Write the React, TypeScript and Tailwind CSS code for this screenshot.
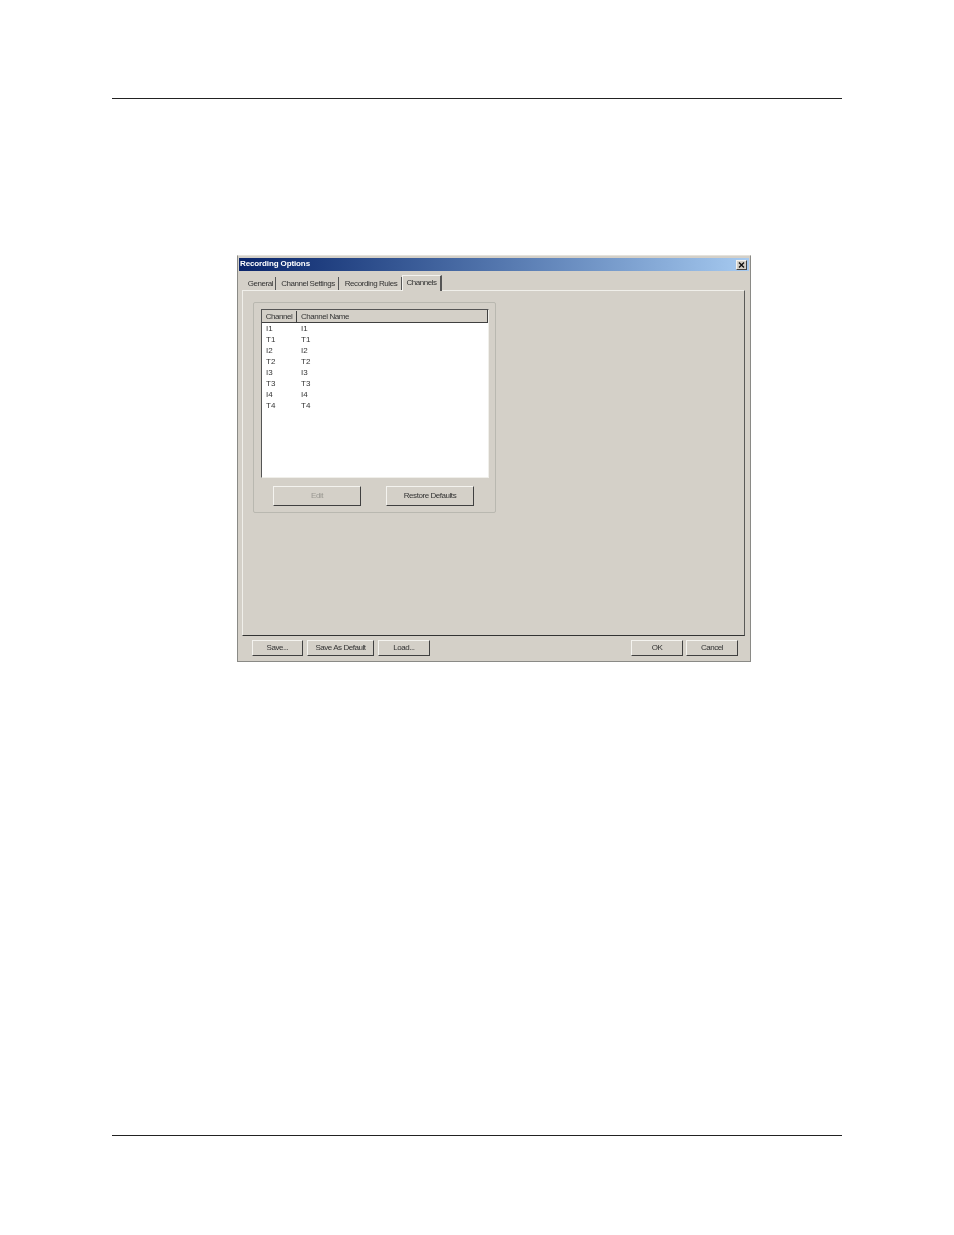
const rows = [
  ["I1", "I1"],
  ["T1", "T1"],
  ["I2", "I2"],
  ["T2", "T2"],
  ["I3", "I3"],
  ["T3", "T3"],
  ["I4", "I4"],
  ["T4", "T4"],
];

function Btn({ label, className, disabled }: { label: string; className: string; disabled?: boolean }) {
  return (
    <div
      className={`flex items-center justify-center whitespace-nowrap border border-t-[#f4f3ef] border-l-[#f4f3ef] border-r-[#404040] border-b-[#404040] text-[8px] leading-none tracking-[-0.45px] ${
        disabled ? "text-[#9a9892]" : "text-[#333333]"
      } ${className}`}
    >
      {label}
    </div>
  );
}

function Tab({ label, className }: { label: string; className: string }) {
  return (
    <div
      className={`-mb-px flex h-[14px] items-center justify-center whitespace-nowrap border-r border-r-[#555555] text-[8px] leading-none tracking-[-0.45px] text-[#333333] ${className}`}
    >
      {label}
    </div>
  );
}

export default function App() {
  return (
    <div className="h-[1235px] w-[954px] overflow-hidden bg-white pt-[98px] font-['Liberation_Sans',Arial,sans-serif]">
      <div className="mx-[112px] h-px bg-[#222222]" />

      <div className="ml-[237px] mt-[156px] flex h-[407px] w-[514px] flex-col border border-[#8a8a86] border-t-[#e4e2dc] bg-[#d4d0c8] px-[1px] pt-[1px] blur-[0.3px]">
        {/* title bar */}
        <div className="mt-[1px] flex h-[13px] items-center justify-between bg-gradient-to-r from-[#0a246a] to-[#a6caf0] pl-[1px] pr-[2px]">
          <span className="whitespace-nowrap pb-[2px] text-[8px] font-bold leading-none tracking-[-0.12px] text-white">Recording Options</span>
          <div className="flex h-[10px] w-[11px] items-center justify-center border border-t-[#f4f3ef] border-l-[#f4f3ef] border-r-[#404040] border-b-[#404040] bg-[#d4d0c8]">
            <svg width="7" height="6" viewBox="0 0 7 6">
              <path d="M1 0.5 L6 5.5 M6 0.5 L1 5.5" stroke="#111111" strokeWidth="1.4" />
            </svg>
          </div>
        </div>

        {/* tabs */}
        <div className="ml-[7px] mt-[3px] flex h-[16px] items-end">
          <Tab label="General" className="w-[30px]" />
          <Tab label="Channel Settings" className="ml-[2px] w-[61px]" />
          <Tab label="Recording Rules" className="ml-[2px] w-[61px]" />
          <div className="z-10 -mb-px flex h-[16px] w-[40px] items-start justify-center whitespace-nowrap border-l border-r-2 border-t border-l-[#f4f3ef] border-r-[#555555] border-t-[#f4f3ef] bg-[#d4d0c8] pt-[3px] text-[8px] leading-none tracking-[-0.45px] text-[#333333]">
            Channels
          </div>
        </div>

        {/* tab page */}
        <div className="ml-[3px] mr-[4px] h-[346px] border border-b-[#333333] border-l-[#f0efea] border-r-[#5a5a58] border-t-[#f0efea] pl-[10px] pt-[11px]">
          <div className="h-[211px] w-[243px] rounded-[2px] border border-[#b9b8b0] pl-[7px] pr-[6px] pt-[6px]">
            {/* list */}
            <div className="h-[169px] w-[228px] border border-b-[#f0efea] border-l-[#555555] border-r-[#f0efea] border-t-[#555555] bg-white">
              <div className="flex h-[13px] border-b border-r border-b-[#404040] border-r-[#404040] bg-[#d4d0c8] pt-[1px] text-[8px] leading-none tracking-[-0.45px] text-[#333333]">
                <div className="flex w-[35px] items-center justify-center border-r border-r-[#404040]">Channel</div>
                <div className="flex items-center pl-[4px]">Channel Name</div>
              </div>
              {rows.map(([channel, name], i) => (
                <div key={i} className="flex h-[11px] items-center text-[8px] leading-none text-[#333333]">
                  <div className="w-[39px] pl-[4px]">{channel}</div>
                  <div>{name}</div>
                </div>
              ))}
            </div>
            <div className="ml-[12px] mt-[8px] flex gap-[25px]">
              <Btn label="Edit" className="h-[20px] w-[88px]" disabled />
              <Btn label="Restore Defaults" className="h-[20px] w-[88px]" />
            </div>
          </div>
        </div>

        {/* footer */}
        <div className="mt-[4px] flex pl-[13px] pr-[11px]">
          <div className="flex gap-[4px]">
            <Btn label="Save..." className="h-[16px] w-[51px]" />
            <Btn label="Save As Default" className="h-[16px] w-[67px]" />
            <Btn label="Load..." className="h-[16px] w-[52px]" />
          </div>
          <div className="ml-auto flex gap-[3px]">
            <Btn label="OK" className="h-[16px] w-[52px]" />
            <Btn label="Cancel" className="h-[16px] w-[52px]" />
          </div>
        </div>
      </div>

      <div className="mx-[112px] mt-[473px] h-px bg-[#222222]" />
    </div>
  );
}
